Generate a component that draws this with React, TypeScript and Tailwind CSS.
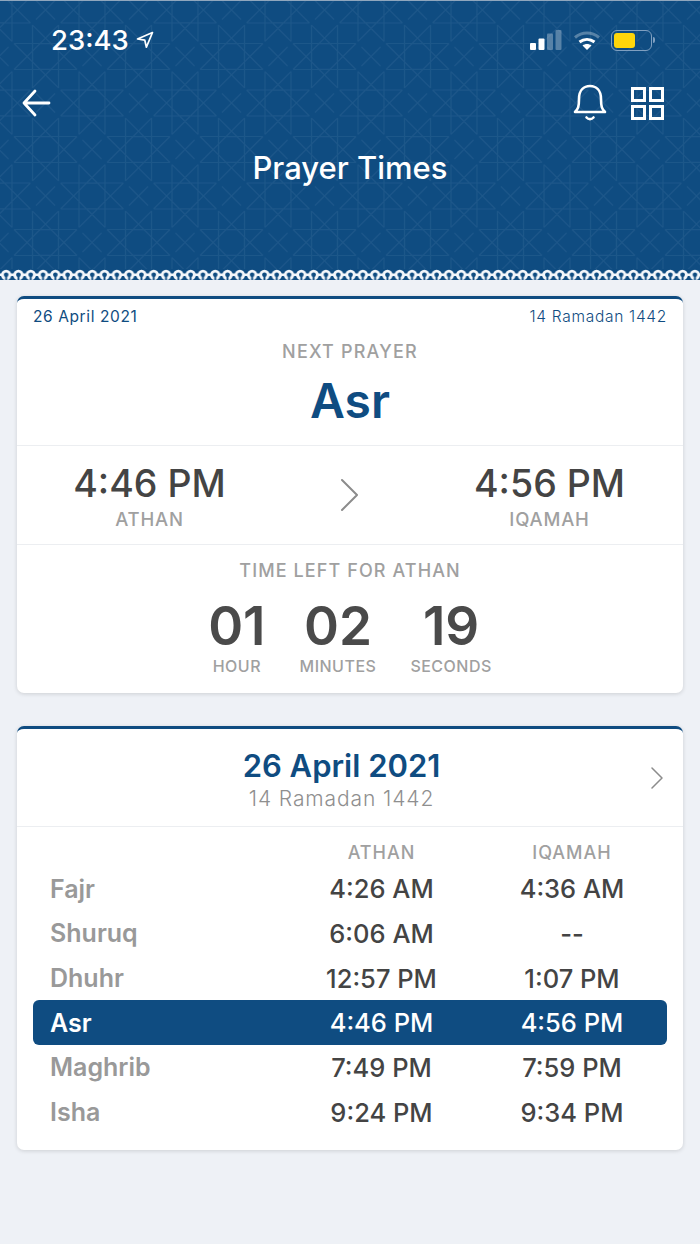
import { Fragment } from 'react';

const prayers = [
    { name: 'Fajr', athan: '4:26 AM', iqamah: '4:36 AM' },
    { name: 'Shuruq', athan: '6:06 AM', iqamah: '--' },
    { name: 'Dhuhr', athan: '12:57 PM', iqamah: '1:07 PM' },
    { name: 'Asr', athan: '4:46 PM', iqamah: '4:56 PM', active: true },
    { name: 'Maghrib', athan: '7:49 PM', iqamah: '7:59 PM' },
    { name: 'Isha', athan: '9:24 PM', iqamah: '9:34 PM' },
];

const countdown = [
    { value: '01', label: 'HOUR' },
    { value: '02', label: 'MINUTES' },
    { value: '19', label: 'SECONDS' },
];

const TILE = 93;

// one octagon with its eight point star, the motif that repeats in the header
function starPath(cx: number, cy: number) {
    const point = (i: number, r: number) => {
        const a = ((i * 45 + 22.5) * Math.PI) / 180;
        return `${(cx + r * Math.cos(a)).toFixed(1)} ${(cy + r * Math.sin(a)).toFixed(1)}`;
    };
    let d = '';
    for (let i = 0; i < 8; i++) {
        d += `M${point(i, 34)}L${point(i + 3, 34)}`;
    }
    d += `M${point(0, 14)}`;
    for (let i = 1; i < 8; i++) d += `L${point(i, 14)}`;
    return d + 'Z';
}

const centers = [
    [0, 0],
    [TILE, 0],
    [0, TILE],
    [TILE, TILE],
    [TILE / 2, TILE / 2],
];

function HeaderPattern() {
    return (
        <svg className="absolute inset-0 w-full h-full" xmlns="http://www.w3.org/2000/svg">
            <defs>
                <pattern id="girih" x="-1" y="9" width={TILE} height={TILE} patternUnits="userSpaceOnUse">
                    <g fill="none" stroke="#235b8d" strokeWidth="1.1" opacity="0.65">
                        {centers.map(([cx, cy]) => (
                            <path key={`${cx}-${cy}`} d={starPath(cx, cy)} />
                        ))}
                        <path d="M37 -9.500L56 9.500M56 -9.500L37 9.500M37 83.500L56 102.500M56 83.500L37 102.500M-9.500 37L9.500 56M9.500 37L-9.500 56M83.500 37L102.500 56M102.500 37L83.500 56" />
                    </g>
                </pattern>
            </defs>
            <rect width="100%" height="100%" fill="url(#girih)" />
        </svg>
    );
}

function Scallops() {
    return (
        <svg className="absolute left-0 bottom-0 w-full h-[11px]" xmlns="http://www.w3.org/2000/svg">
            <defs>
                <pattern id="scallop" x="0" y="0" width="12.3" height="11" patternUnits="userSpaceOnUse">
                    <rect width="12.3" height="11" fill="#0f4c81" />
                    <circle cx="6.150" cy="6" r="5.200" fill="#f3f6fa" />
                    <rect x="0" y="4.500" width="12.3" height="2.500" fill="#f3f6fa" />
                    <circle cx="6.150" cy="5.800" r="2.300" fill="#0f4c81" />
                    <rect x="5.200" y="6.500" width="1.900" height="4.500" fill="#0f4c81" />
                </pattern>
            </defs>
            <rect width="100%" height="100%" fill="url(#scallop)" />
        </svg>
    );
}

function StatusBar() {
    return (
        <div className="flex items-center justify-between h-[26px] pl-[51px] pr-[45px]">
            <div className="flex items-center gap-[7px]">
                <span className="mt-[2px] text-[27.500px] font-medium leading-none text-white">23:43</span>
                <svg width="18" height="18" viewBox="0 0 18 18" fill="none" stroke="white" strokeWidth="1.7" strokeLinejoin="round">
                    <path d="M16.500 1.500L1.500 8l7.300 1.200 1.600 7z" />
                </svg>
            </div>
            <div className="flex items-center">
                <svg width="32" height="21" viewBox="0 0 32 21" fill="white" className="mr-[11px]">
                    <rect x="0" y="13" width="6" height="7" rx="1" />
                    <rect x="8.500" y="8.500" width="6" height="11.500" rx="1" />
                    <rect x="17" y="3.500" width="6" height="16.500" rx="1" opacity="0.3" />
                    <rect x="25.500" y="0" width="6" height="20" rx="1" opacity="0.3" />
                </svg>
                <svg width="28" height="21" viewBox="0 0 28 21" fill="none" stroke="white" strokeWidth="3" className="mr-[10px]">
                    <path d="M2 7.500C9 1.500 19 1.500 26 7.500" opacity="0.3" />
                    <path d="M6.500 12C11 8.500 17 8.500 21.500 12" />
                    <path d="M14 20l-4.500-4.500C12 13.500 16 13.500 18.500 15.500z" fill="white" stroke="none" />
                </svg>
                <div className="flex items-center">
                    <div className="w-[41px] h-[21px] rounded-[6px] border border-[#7f9fc0] p-[2px]">
                        <div className="w-[21px] h-full rounded-[3px] bg-[#ffd60a]" />
                    </div>
                    <div className="w-[2px] h-[6px] ml-[1px] rounded-r-sm bg-[#7f9fc0]" />
                </div>
            </div>
        </div>
    );
}

function Divider() {
    return <div className="h-px bg-[#eceef1]" />;
}

export default function App() {
    return (
        <div className="relative min-h-[1244px] bg-[#eef1f6] font-['Inter',sans-serif]">
            <header className="relative h-[280px] overflow-hidden bg-[#0f4c81] border-t border-[#8fa6bd]">
                <HeaderPattern />
                <Scallops />
                <div className="relative pt-[26px]">
                    <StatusBar />
                    <div className="flex items-center justify-between h-[44px] mt-[28px] pl-[21px] pr-[36px]">
                        <svg width="30" height="30" viewBox="0 0 30 30" fill="none" stroke="white" strokeWidth="2.800" strokeLinecap="round" strokeLinejoin="round">
                            <path d="M3 15h25M14 3L3 15l11 12" />
                        </svg>
                        <div className="flex items-center gap-[24px]">
                            <svg width="34" height="38" viewBox="0 0 34 38" fill="none" stroke="white" strokeWidth="2.600" strokeLinecap="round" strokeLinejoin="round">
                                <path d="M2 28c3-3 4-5 4-13C6 6 11 2 17 2s11 4 11 13c0 8 1 10 4 13z" />
                                <path d="M13.500 33.500c2 2.200 5 2.200 7 0" />
                            </svg>
                            <svg width="33" height="33" viewBox="0 0 33 33" fill="none" stroke="white" strokeWidth="3">
                                <rect x="1.500" y="1.500" width="12" height="12" />
                                <rect x="19.500" y="1.500" width="12" height="12" />
                                <rect x="1.500" y="19.500" width="12" height="12" />
                                <rect x="19.500" y="19.500" width="12" height="12" />
                            </svg>
                        </div>
                    </div>
                    <h1 className="mt-[21px] text-center text-[31px] font-medium leading-[44px] text-white">Prayer Times</h1>
                </div>
            </header>

            <main className="px-[17px] pt-[16px]">
                <section className="rounded-[7px] border-t-[3px] border-[#0f4c81] bg-white shadow-[0_1px_4px_rgba(0,0,0,0.14)]">
                    <div className="flex items-center justify-between h-[36px] pl-[16px] pr-[16px] text-[#0f4c81]">
                        <span className="text-[15.500px] tracking-[0.6px]">26 April 2021</span>
                        <span className="text-[15.500px] font-light tracking-[0.7px]">14 Ramadan 1442</span>
                    </div>
                    <div className="h-[110px] pt-[3px] text-center">
                        <p className="text-[18px] font-medium leading-[28px] tracking-[1.2px] text-[#a0a0a0]">NEXT PRAYER</p>
                        <p className="mt-[6px] text-[48px] font-semibold leading-[58px] text-[#0f4c81]">Asr</p>
                    </div>
                    <Divider />
                    <div className="grid grid-cols-[265px_134px_267px] h-[98px] text-center">
                        <div className="pt-[15px]">
                            <p className="text-[37.500px] font-medium leading-[46px] text-[#444444]">4:46 PM</p>
                            <p className="text-[18.500px] font-medium leading-[24px] tracking-[0.8px] text-[#a0a0a0]">ATHAN</p>
                        </div>
                        <div className="flex items-center justify-center">
                            <svg width="20" height="34" viewBox="0 0 20 34" fill="none" stroke="#8c8c8c" strokeWidth="2" strokeLinecap="round" strokeLinejoin="round">
                                <path d="M3 2l15 15L3 32" />
                            </svg>
                        </div>
                        <div className="pt-[15px]">
                            <p className="text-[37.500px] font-medium leading-[46px] text-[#444444]">4:56 PM</p>
                            <p className="text-[18.500px] font-medium leading-[24px] tracking-[0.8px] text-[#a0a0a0]">IQAMAH</p>
                        </div>
                    </div>
                    <Divider />
                    <div className="h-[148px] pt-[12px] text-center">
                        <p className="text-[18px] font-medium leading-[28px] tracking-[1.1px] text-[#a0a0a0]">TIME LEFT FOR ATHAN</p>
                        <div className="flex justify-center gap-[34px] mt-[12px]">
                            {countdown.map((item) => (
                                <div key={item.label} className="flex flex-col items-center">
                                    <span className="text-[53px] font-semibold leading-[58px] text-[#4a4a4a]">{item.value}</span>
                                    <span className="-mt-[1px] text-[16px] font-medium leading-[24px] tracking-[0.5px] text-[#a0a0a0]">{item.label}</span>
                                </div>
                            ))}
                        </div>
                    </div>
                </section>

                <section className="mt-[33px] rounded-[7px] border-t-[3px] border-[#0f4c81] bg-white shadow-[0_1px_4px_rgba(0,0,0,0.14)]">
                    <div className="relative h-[97px] pt-[18px] pr-[17px] text-center">
                        <p className="text-[31px] font-semibold leading-[38px] text-[#0f4c81]">26 April 2021</p>
                        <p className="mt-[1px] text-[21px] font-light leading-[26px] tracking-[0.9px] text-[#8f8f8f]">14 Ramadan 1442</p>
                        <svg width="13" height="22" viewBox="0 0 13 22" fill="none" stroke="#8c8c8c" strokeWidth="1.500" strokeLinecap="round" strokeLinejoin="round" className="absolute right-[20px] top-[38px]">
                            <path d="M2 1l10 10L2 21" />
                        </svg>
                    </div>
                    <Divider />
                    <div className="px-[16px] pt-[12px] pb-[16px]">
                        <div className="grid grid-cols-[250px_197px_184px] h-[24px] mb-[3px] items-center text-center text-[18px] font-medium tracking-[1px] text-[#a0a0a0]">
                            <span />
                            <span>ATHAN</span>
                            <span>IQAMAH</span>
                        </div>
                        {prayers.map((p) => (
                            <Fragment key={p.name}>
                                <div className={`grid grid-cols-[250px_197px_184px] h-[44.700px] pt-[2px] items-center text-center text-[25.500px] font-medium rounded-[6px] ${p.active ? 'bg-[#0f4c81] text-white' : 'text-[#444444]'}`}>
                                    <span className={`pl-[17px] text-left text-[25px] font-semibold ${p.active ? 'font-medium' : 'text-[#999999]'}`}>{p.name}</span>
                                    <span>{p.athan}</span>
                                    <span>{p.iqamah}</span>
                                </div>
                            </Fragment>
                        ))}
                    </div>
                </section>
            </main>
        </div>
    );
}
